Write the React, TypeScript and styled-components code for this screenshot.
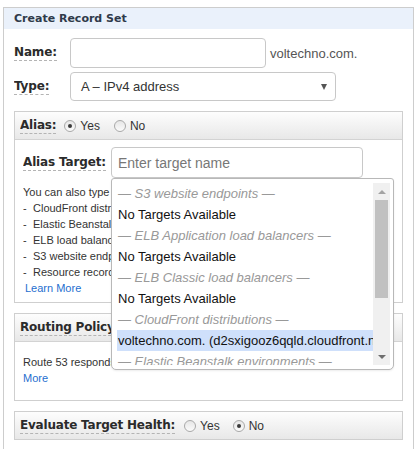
import React from "react";
import styled, { createGlobalStyle } from "styled-components";

const GlobalStyle = createGlobalStyle`
  html, body { margin: 0; padding: 0; background: #fff; }
  body { font-family: "Liberation Sans", Arial, sans-serif; color: #333; }
  * { box-sizing: border-box; }
`;

const Page = styled.div`
  height: 449px;
  overflow: hidden;
  padding: 7px 0 0 3px;
`;

const Panel = styled.div`
  width: 411px;
  min-height: 442px;
  border: 1px solid #cdcdcd;
  border-bottom: none;
`;

const PanelHeader = styled.div`
  height: 21px;
  background: #eaf1fb;
  padding-left: 10px;
  display: flex;
  align-items: center;
  font: bold 11px "DejaVu Sans", Verdana, sans-serif;
  color: #2f3a4a;
`;

const Form = styled.div`
  padding: 9px 0 0 10px;
  display: flex;
  flex-direction: column;
`;

const Row = styled.div<{ $h: number; $gap?: number }>`
  display: flex;
  align-items: center;
  height: ${(p) => p.$h}px;
  margin-bottom: ${(p) => p.$gap ?? 0}px;
`;

const LabelCell = styled.div<{ $w: number }>`
  width: ${(p) => p.$w}px;
  flex: none;
  display: flex;
  align-items: center;
`;

const Label = styled.span`
  font: bold 12px "DejaVu Sans", Verdana, sans-serif;
  letter-spacing: -0.15px;
  color: #2b2b2b;
  border-bottom: 1px dashed #b4b4b4;
  padding-bottom: 1px;
  line-height: 14px;
  white-space: nowrap;
  overflow: hidden;
`;

const TextInput = styled.div<{ $w: number; $h: number }>`
  width: ${(p) => p.$w}px;
  height: ${(p) => p.$h}px;
  border: 1px solid #c8c8c8;
  border-radius: 4px;
  background: #fff;
  display: flex;
  align-items: center;
  padding-left: 6px;
  font-size: 14px;
  color: #777;
`;

const Suffix = styled.span`
  margin-left: 4px;
  font-size: 13px;
  color: #555;
`;

const Select = styled.div`
  width: 266px;
  height: 29px;
  border: 1px solid #c8c8c8;
  border-radius: 4px;
  background: #fff;
  display: flex;
  align-items: center;
  justify-content: space-between;
  padding: 0 8px 0 10px;
  font-size: 13px;
  color: #333;
`;

const Caret = styled.span`
  width: 0;
  height: 0;
  border-left: 3px solid transparent;
  border-right: 3px solid transparent;
  border-top: 6px solid #555;
`;

const Box = styled.div<{ $top: number; $z?: number }>`
  width: 389px;
  margin-top: ${(p) => p.$top}px;
  border: 1px solid #cfcfcf;
  position: relative;
  z-index: ${(p) => p.$z ?? 0};
`;

const BoxHeader = styled.div<{ $last?: boolean }>`
  height: ${(p) => (p.$last ? 27 : 28)}px;
  background: linear-gradient(#fdfdfd, #e8e8e8);
  border-bottom: ${(p) => (p.$last ? "none" : "1px solid #d3d3d3")};
  display: flex;
  align-items: center;
  padding-left: 5px;
  font-size: 12px;
  color: #333;
`;

const HeadLabel = styled(Label)<{ $mr?: number; $w?: number }>`
  letter-spacing: -0.2px;
  margin-right: ${(p) => p.$mr ?? 0}px;
  ${(p) => (p.$w ? `max-width: ${p.$w}px;` : "")}
`;

const RadioOption = styled.label<{ $mr?: number }>`
  display: inline-flex;
  align-items: center;
  gap: 4px;
  margin-right: ${(p) => p.$mr ?? 0}px;
  font-size: 12px;
  color: #333;
`;

const Radio = styled.span<{ $checked?: boolean }>`
  width: 12px;
  height: 12px;
  border-radius: 50%;
  border: 1px solid #a9a9a9;
  background: linear-gradient(#e6e6e6, #fbfbfb);
  display: inline-flex;
  align-items: center;
  justify-content: center;
  &::after {
    content: "";
    width: 4px;
    height: 4px;
    border-radius: 50%;
    background: #3a3a3a;
    display: ${(p) => (p.$checked ? "block" : "none")};
  }
`;

const BoxBody = styled.div<{ $pt: number; $pb: number }>`
  position: relative;
  padding: ${(p) => p.$pt}px 0 ${(p) => p.$pb}px 8px;
`;

const HelpBlock = styled.div<{ $mt?: number }>`
  margin-top: ${(p) => p.$mt ?? 0}px;
  width: 88px;
  font-size: 11px;
  line-height: 16px;
  color: #333;
`;

const HelpLine = styled.div`
  white-space: nowrap;
  overflow: hidden;
`;

const Dash = styled.span`
  display: inline-block;
  width: 10px;
`;

const Link = styled.a<{ $indent?: number }>`
  color: #1f6fcf;
  text-decoration: none;
  margin-left: ${(p) => p.$indent ?? 0}px;
`;

const Dropdown = styled.div`
  position: absolute;
  left: 96px;
  top: 38px;
  width: 283px;
  height: 192px;
  background: #fff;
  border: 1px solid #b8b8b8;
  border-radius: 3px 3px 5px 5px;
  padding: 4px 3px 4px 5px;
  display: flex;
  box-shadow: 0 1px 2px rgba(0, 0, 0, 0.08);
`;

const List = styled.div`
  flex: 1;
  overflow: hidden;
`;

const Option = styled.div<{ $group?: boolean; $selected?: boolean }>`
  height: 21px;
  line-height: 21px;
  padding-left: 1px;
  white-space: nowrap;
  overflow: hidden;
  font-size: 13px;
  font-style: ${(p) => (p.$group ? "italic" : "normal")};
  color: ${(p) => (p.$group ? "#999" : "#111")};
  background: ${(p) => (p.$selected ? "#cfe0fb" : "transparent")};
`;

const Scrollbar = styled.div`
  width: 17px;
  flex: none;
  background: #f0f0f0;
  display: flex;
  flex-direction: column;
  align-items: center;
`;

const ArrowBtn = styled.div`
  height: 17px;
  width: 17px;
  flex: none;
  display: flex;
  align-items: center;
  justify-content: center;
`;

const Tri = styled.span<{ $up?: boolean }>`
  width: 0;
  height: 0;
  border-left: 4px solid transparent;
  border-right: 4px solid transparent;
  ${(p) => (p.$up ? "border-bottom: 4px solid #a3a3a3;" : "border-top: 4px solid #6e6e6e;")}
`;

const Track = styled.div`
  flex: 1;
  width: 13px;
`;

const Thumb = styled.div`
  width: 13px;
  height: 98px;
  background: #c1c1c1;
`;

const options: { text: string; group?: boolean; selected?: boolean }[] = [
  { text: "— S3 website endpoints —", group: true },
  { text: "No Targets Available" },
  { text: "— ELB Application load balancers —", group: true },
  { text: "No Targets Available" },
  { text: "— ELB Classic load balancers —", group: true },
  { text: "No Targets Available" },
  { text: "— CloudFront distributions —", group: true },
  { text: "voltechno.com. (d2sxigooz6qqld.cloudfront.net)", selected: true },
  { text: "— Elastic Beanstalk environments —", group: true },
];

const helpItems = [
  "CloudFront distribution domain name",
  "Elastic Beanstalk environment CNAME",
  "ELB load balancer DNS name",
  "S3 website endpoint",
  "Resource record set in this hosted zone",
];

export default function App() {
  return (
    <>
      <GlobalStyle />
      <Page>
        <Panel>
          <PanelHeader>Create Record Set</PanelHeader>
          <Form>
            <Row $h={30} $gap={4}>
              <LabelCell $w={56}>
                <Label>Name:</Label>
              </LabelCell>
              <TextInput $w={196} $h={30} />
              <Suffix>voltechno.com.</Suffix>
            </Row>
            <Row $h={29}>
              <LabelCell $w={56}>
                <Label>Type:</Label>
              </LabelCell>
              <Select>
                <span>A – IPv4 address</span>
                <Caret />
              </Select>
            </Row>

            <Box $top={10} $z={2}>
              <BoxHeader>
                <HeadLabel $mr={8}>Alias:</HeadLabel>
                <RadioOption $mr={14}>
                  <Radio $checked />
                  Yes
                </RadioOption>
                <RadioOption>
                  <Radio />
                  No
                </RadioOption>
              </BoxHeader>
              <BoxBody $pt={7} $pb={6}>
                <Row $h={31}>
                  <LabelCell $w={88}>
                    <Label>Alias Target:</Label>
                  </LabelCell>
                  <TextInput $w={252} $h={31}>
                    Enter target name
                  </TextInput>
                </Row>
                <HelpBlock $mt={6}>
                  <HelpLine>You can also type the domain name</HelpLine>
                  {helpItems.map((t) => (
                    <HelpLine key={t}>
                      <Dash>-</Dash>
                      {t}
                    </HelpLine>
                  ))}
                  <HelpLine>
                    <Link $indent={2} href="#">
                      Learn More
                    </Link>
                  </HelpLine>
                </HelpBlock>
                <Dropdown>
                  <List>
                    {options.map((o, i) => (
                      <Option key={i} $group={o.group} $selected={o.selected}>
                        {o.text}
                      </Option>
                    ))}
                  </List>
                  <Scrollbar>
                    <ArrowBtn>
                      <Tri $up />
                    </ArrowBtn>
                    <Track>
                      <Thumb />
                    </Track>
                    <ArrowBtn>
                      <Tri />
                    </ArrowBtn>
                  </Scrollbar>
                </Dropdown>
              </BoxBody>
            </Box>

            <Box $top={10}>
              <BoxHeader>
                <HeadLabel $w={91}>Routing Policy:</HeadLabel>
              </BoxHeader>
              <BoxBody $pt={12} $pb={14}>
                <HelpBlock>
                  <HelpLine>Route 53 responds to queries</HelpLine>
                  <HelpLine>
                    <Link href="#">More</Link>
                  </HelpLine>
                </HelpBlock>
              </BoxBody>
            </Box>

            <Box $top={10}>
              <BoxHeader $last>
                <HeadLabel $mr={9}>Evaluate Target Health:</HeadLabel>
                <RadioOption $mr={13}>
                  <Radio />
                  Yes
                </RadioOption>
                <RadioOption>
                  <Radio $checked />
                  No
                </RadioOption>
              </BoxHeader>
            </Box>
          </Form>
        </Panel>
      </Page>
    </>
  );
}
